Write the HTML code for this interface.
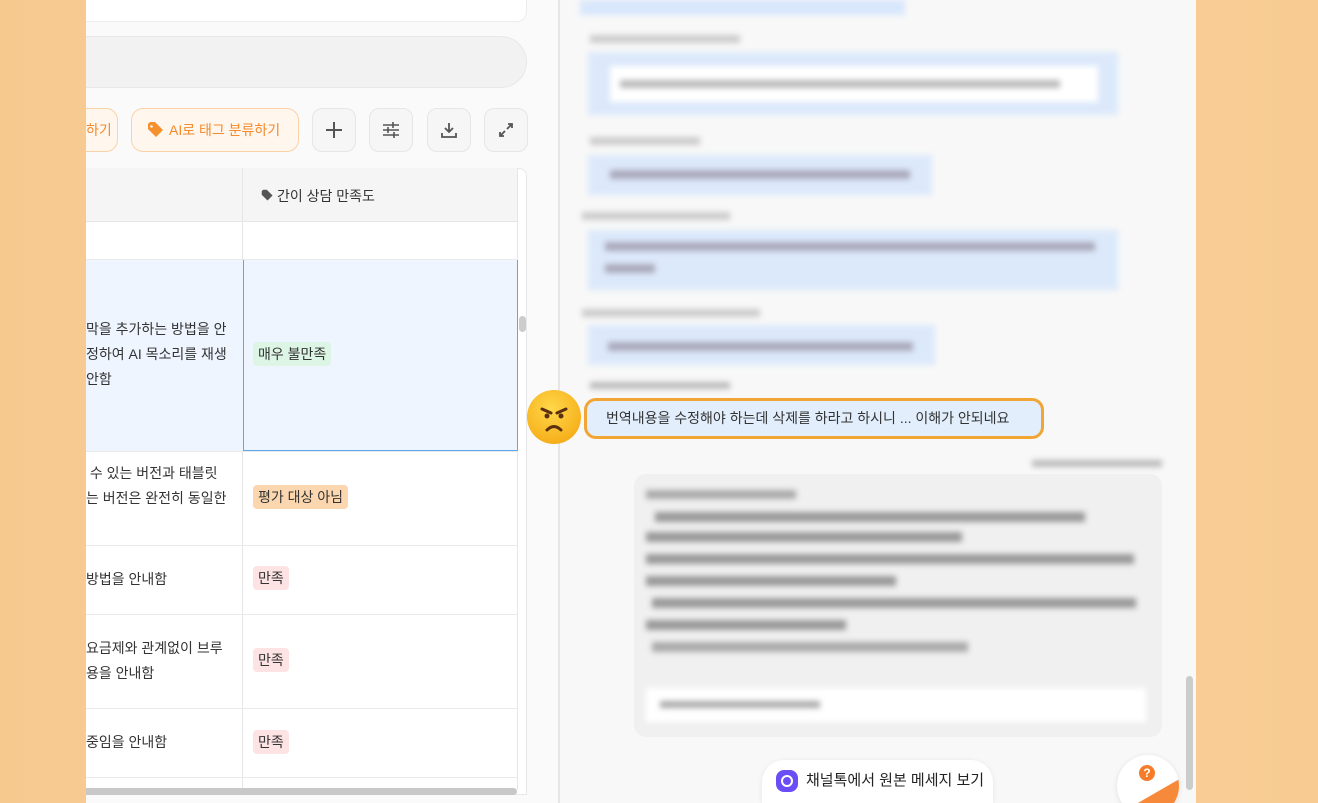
<!DOCTYPE html>
<html style="width:1318px;height:803px;overflow:hidden"><head><meta charset="utf-8"><style>
*{margin:0;padding:0;box-sizing:border-box}
body{width:1318px;height:803px;overflow:hidden;background:linear-gradient(90deg,#f6c98f,#fbd39e 50%,#f7cb92);font-family:"Liberation Sans","Noto Sans CJK KR",sans-serif;position:relative;color:#333}
#w{position:absolute;left:0;top:0;width:1318px;height:803px;overflow:hidden}
.a{position:absolute}
.bl{position:absolute;filter:blur(3px)}
.btn{position:absolute;top:108px;width:44px;height:44px;border:1px solid #e6e6e6;border-radius:10px;background:#f6f6f6;display:flex;align-items:center;justify-content:center}
.tag{display:inline-block;padding:2px 5px;border-radius:4px;font-size:14px;line-height:20px}
.cell{position:absolute;font-size:14px;color:#333;line-height:25px}
.hl{position:absolute;left:86px;width:432px;height:1px;background:#eaeaea}
</style></head><body><div id="w">
<div class="a" style="left:86px;top:0;width:1110px;height:803px;background:#fafafa"></div>
<div class="a" style="left:86px;top:0;width:441px;height:22px;background:#fff;border:1px solid #ececec;border-top:none;border-left:none;border-radius:0 0 10px 0"></div>
<div class="a" style="left:86px;top:36px;width:441px;height:52px;background:#f2f2f2;border:1px solid #e8e8e8;border-left:none;border-radius:0 26px 26px 0"></div>
<div class="a" style="left:86px;top:108px;width:32px;height:44px;border:1px solid #fbd2a8;border-left:none;border-radius:0 12px 12px 0;background:#fff6ee;color:#f58a2a;font-size:14px;line-height:42px">하기</div>
<div class="a" style="left:131px;top:108px;width:168px;height:44px;border:1px solid #fbd2a8;border-radius:12px;background:#fff6ee;color:#f58a2a;font-size:14px;line-height:42px;padding-left:15px">
<svg width="18" height="16" viewBox="0 0 18 16" style="vertical-align:-3px;margin-right:4px"><path d="M1 2v5l8 8 7-7-8-8H3z" fill="#f5902e"/><circle cx="4.5" cy="4.5" r="1.3" fill="#fff6ee"/></svg>AI로 태그 분류하기</div>
<div class="btn" style="left:312px"><svg width="18" height="18"><path d="M9 1v16M1 9h16" stroke="#555" stroke-width="2"/></svg></div>
<div class="btn" style="left:369px"><svg width="18" height="18" stroke="#555" stroke-width="1.6"><path d="M1 4h16M1 9h16M1 14h16M11 1v6M6 6v6M12 11v6"/></svg></div>
<div class="btn" style="left:427px"><svg width="18" height="18" stroke="#555" stroke-width="1.8" fill="none"><path d="M9 2v9M5 7l4 4 4-4M2 12v4h14v-4"/></svg></div>
<div class="btn" style="left:484px"><svg width="18" height="18" stroke="#555" stroke-width="1.8" fill="none"><path d="M11 3h4v4M15 3l-5 5M7 15H3v-4M3 15l5-5"/></svg></div>
<div class="a" style="left:86px;top:168px;width:441px;height:627px;background:#fff;border:1px solid #e8e8e8;border-left:none;border-radius:0 8px 0 0"></div>
<div class="a" style="left:86px;top:168px;width:431px;height:54px;background:#f5f5f5;border-bottom:1px solid #e6e6e6"></div>
<div class="a" style="left:242px;top:168px;width:1px;height:622px;background:#e6e6e6"></div>
<div class="a" style="left:517px;top:168px;width:1px;height:622px;background:#e6e6e6"></div>
<div class="a" style="left:261px;top:186px;font-size:14px;color:#333"><svg width="13" height="13" viewBox="0 0 18 16" style="vertical-align:-1px;margin-right:3px"><path d="M1 2v5l8 8 7-7-8-8H3z" fill="#555"/></svg>간이 상담 만족도</div>
<div class="a" style="left:86px;top:259px;width:157px;height:192px;background:#eef5fe"></div>
<div class="a" style="left:243px;top:259px;width:275px;height:192px;background:#eef5fe;border:1.5px solid #59a7ec"></div>
<div class="hl" style="top:259px"></div><div class="hl" style="top:451px"></div><div class="hl" style="top:545px"></div><div class="hl" style="top:614px"></div><div class="hl" style="top:708px"></div><div class="hl" style="top:777px"></div>
<div class="a" style="left:519px;top:316px;width:7px;height:16px;background:#ccc;border-radius:4px"></div>
<div class="a" style="left:86px;top:788px;width:431px;height:7px;background:#c8c8c8;border-radius:0 4px 4px 0"></div>
<div class="cell" style="left:86px;top:317px;width:156px;overflow:hidden;white-space:nowrap">막을 추가하는 방법을 안<br>정하여 AI 목소리를 재생<br>안함</div>
<div class="cell" style="left:253px;top:342px"><span class="tag" style="background:#dcf5e4">매우 불만족</span></div>
<div class="cell" style="left:86px;top:461px;white-space:nowrap">&nbsp;수 있는 버전과 태블릿<br>는 버전은 완전히 동일한</div>
<div class="cell" style="left:253px;top:485px"><span class="tag" style="background:#fbd6ae">평가 대상 아님</span></div>
<div class="cell" style="left:86px;top:567px">방법을 안내함</div>
<div class="cell" style="left:253px;top:566px"><span class="tag" style="background:#fde3e3">만족</span></div>
<div class="cell" style="left:86px;top:636px">요금제와 관계없이 브루<br>용을 안내함</div>
<div class="cell" style="left:253px;top:648px"><span class="tag" style="background:#fde3e3">만족</span></div>
<div class="cell" style="left:86px;top:730px">중임을 안내함</div>
<div class="cell" style="left:253px;top:730px"><span class="tag" style="background:#fde3e3">만족</span></div>
<div class="a" style="left:558px;top:0;width:2px;height:803px;background:#e6e6e6"></div>
<div class="a" style="left:560px;top:0;width:636px;height:803px;background:#f8f8f8"></div>
<div class="bl" style="left:580px;top:0;width:325px;height:15px;background:#d8e7fb"></div>
<div class="bl" style="left:590px;top:35px;width:150px;height:8px;background:#ccc"></div>
<div class="bl" style="left:588px;top:52px;width:530px;height:63px;background:#dce9fb"></div>
<div class="bl" style="left:610px;top:66px;width:488px;height:36px;background:#fff"></div>
<div class="bl" style="left:620px;top:80px;width:440px;height:8px;background:#bbb"></div>
<div class="bl" style="left:590px;top:137px;width:110px;height:8px;background:#ccc"></div>
<div class="bl" style="left:588px;top:155px;width:344px;height:40px;background:#dce9fb"></div>
<div class="bl" style="left:610px;top:170px;width:300px;height:9px;background:#aab"></div>
<div class="bl" style="left:582px;top:212px;width:148px;height:8px;background:#ccc"></div>
<div class="bl" style="left:588px;top:230px;width:530px;height:60px;background:#dce9fb"></div>
<div class="bl" style="left:605px;top:242px;width:490px;height:9px;background:#aab"></div>
<div class="bl" style="left:605px;top:264px;width:50px;height:9px;background:#aab"></div>
<div class="bl" style="left:582px;top:309px;width:178px;height:8px;background:#ccc"></div>
<div class="bl" style="left:588px;top:325px;width:347px;height:40px;background:#dce9fb"></div>
<div class="bl" style="left:608px;top:342px;width:305px;height:9px;background:#aab"></div>
<div class="bl" style="left:590px;top:382px;width:140px;height:7px;background:#bbb"></div>
<div class="a" style="left:584px;top:398px;width:460px;height:41px;background:#e2eefc;border:3px solid #f0a535;border-radius:12px;font-size:14px;line-height:35px;padding-left:19px;color:#333">번역내용을 수정해야 하는데 삭제를 하라고 하시니 ... 이해가 안되네요</div>
<div class="a" style="left:527px;top:390px;width:54px;height:54px;border-radius:50%;background:radial-gradient(circle at 45% 35%,#ffd84a,#f7b21e 70%,#e99a14);font-size:0">
<svg width="54" height="54" stroke="#5a3010" stroke-width="3" fill="none" stroke-linecap="round"><path d="M15 19l9 4M39 19l-9 4"/><circle cx="20" cy="26" r="2.5" fill="#5a3010" stroke="none"/><circle cx="34" cy="26" r="2.5" fill="#5a3010" stroke="none"/><path d="M20 40q7-7 14 0"/></svg></div>
<div class="bl" style="left:1032px;top:460px;width:130px;height:7px;background:#bbb"></div>
<div class="a" style="left:634px;top:474px;width:528px;height:263px;background:#f0f0f0;border-radius:12px"></div>
<div class="bl" style="left:646px;top:490px;width:150px;height:9px;background:#aaa"></div>
<div class="bl" style="left:655px;top:512px;width:430px;height:10px;background:#999"></div>
<div class="bl" style="left:646px;top:532px;width:316px;height:10px;background:#999"></div>
<div class="bl" style="left:646px;top:554px;width:488px;height:10px;background:#999"></div>
<div class="bl" style="left:646px;top:576px;width:250px;height:10px;background:#999"></div>
<div class="bl" style="left:652px;top:598px;width:484px;height:10px;background:#999"></div>
<div class="bl" style="left:646px;top:620px;width:200px;height:10px;background:#999"></div>
<div class="bl" style="left:652px;top:642px;width:316px;height:10px;background:#aaa"></div>
<div class="bl" style="left:646px;top:688px;width:500px;height:34px;background:#fff"></div>
<div class="bl" style="left:660px;top:701px;width:160px;height:7px;background:#aaa"></div>
<div class="a" style="left:1186px;top:676px;width:7px;height:114px;background:#ccc;border-radius:4px"></div>
<div class="a" style="left:762px;top:760px;width:231px;height:43px;background:#fff;border-radius:22px 22px 0 0;box-shadow:0 1px 6px rgba(0,0,0,.08);font-size:15px;line-height:42px;padding-left:44px;color:#222">채널톡에서 원본 메세지 보기</div>
<div class="a" style="left:776px;top:770px;width:22px;height:22px;border-radius:8px;background:#6b4df5"><div style="position:absolute;left:5px;top:5px;width:12px;height:12px;border-radius:50%;border:2.5px solid #fff"></div></div>
<div class="a" style="left:1112px;top:750px;width:72px;height:53px;overflow:hidden">
<div style="position:absolute;left:5px;top:5px;width:62px;height:62px;border-radius:50%;background:#fff;box-shadow:0 1px 6px rgba(0,0,0,.1);overflow:hidden">
<div style="position:absolute;left:22px;top:10px;width:16px;height:16px;border-radius:50%;background:#f57d2a;color:#fff;font-size:12px;font-weight:bold;text-align:center;line-height:16px">?</div>
<div style="position:absolute;left:12px;top:36px;width:70px;height:40px;background:#f78a3a;transform:rotate(-30deg)"></div></div></div>
</div></body></html>
